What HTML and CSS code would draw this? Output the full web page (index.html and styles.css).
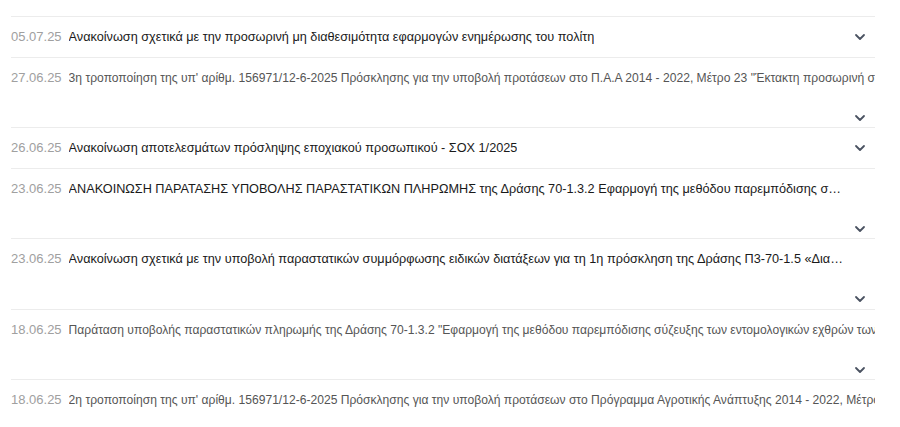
FILE: index.html
```html
<!DOCTYPE html>
<html lang="el">
<head>
    <meta charset="UTF-8">
    <meta name="viewport" content="width=device-width, initial-scale=1.0">
    <title>Ανακοινώσεις</title>
    <link rel="stylesheet" href="styles.css">
</head>
<body>
    <ul class="news">
        <li class="item">
            <div class="head">
                <span class="date">05.07.25</span>
                <span class="title">Ανακοίνωση σχετικά με την προσωρινή μη διαθεσιμότητα εφαρμογών ενημέρωσης του πολίτη</span>
            </div>
            <button class="toggle" aria-label="Άνοιγμα">
                <svg width="12" height="8" viewBox="0 0 12 8"><path d="M2 2l4 4 4-4" /></svg>
            </button>
        </li>
        <li class="item wrap plain">
            <div class="head">
                <span class="date">27.06.25</span>
                <span class="title">3η τροποποίηση της υπ' αρίθμ. 156971/12-6-2025 Πρόσκλησης για την υποβολή προτάσεων στο Π.Α.Α 2014 - 2022, Μέτρο 23 "Έκτακτη προσωρινή στήριξη</span>
            </div>
            <button class="toggle" aria-label="Άνοιγμα">
                <svg width="12" height="8" viewBox="0 0 12 8"><path d="M2 2l4 4 4-4" /></svg>
            </button>
        </li>
        <li class="item">
            <div class="head">
                <span class="date">26.06.25</span>
                <span class="title">Ανακοίνωση αποτελεσμάτων πρόσληψης εποχιακού προσωπικού - ΣΟΧ 1/2025</span>
            </div>
            <button class="toggle" aria-label="Άνοιγμα">
                <svg width="12" height="8" viewBox="0 0 12 8"><path d="M2 2l4 4 4-4" /></svg>
            </button>
        </li>
        <li class="item wrap trunc">
            <div class="head">
                <span class="date">23.06.25</span>
                <span class="title">ΑΝΑΚΟΙΝΩΣΗ ΠΑΡΑΤΑΣΗΣ ΥΠΟΒΟΛΗΣ ΠΑΡΑΣΤΑΤΙΚΩΝ ΠΛΗΡΩΜΗΣ της Δράσης 70-1.3.2 Εφαρμογή της μεθόδου παρεμπόδισης σύζευξης</span>
            </div>
            <button class="toggle" aria-label="Άνοιγμα">
                <svg width="12" height="8" viewBox="0 0 12 8"><path d="M2 2l4 4 4-4" /></svg>
            </button>
        </li>
        <li class="item wrap trunc">
            <div class="head">
                <span class="date">23.06.25</span>
                <span class="title">Ανακοίνωση σχετικά με την υποβολή παραστατικών συμμόρφωσης ειδικών διατάξεων για τη 1η πρόσκληση της Δράσης Π3-70-1.5 «Διατήρηση</span>
            </div>
            <button class="toggle" aria-label="Άνοιγμα">
                <svg width="12" height="8" viewBox="0 0 12 8"><path d="M2 2l4 4 4-4" /></svg>
            </button>
        </li>
        <li class="item wrap plain">
            <div class="head">
                <span class="date">18.06.25</span>
                <span class="title">Παράταση υποβολής παραστατικών πληρωμής της Δράσης 70-1.3.2 "Εφαρμογή της μεθόδου παρεμπόδισης σύζευξης των εντομολογικών εχθρών των καλλιεργειών"</span>
            </div>
            <button class="toggle" aria-label="Άνοιγμα">
                <svg width="12" height="8" viewBox="0 0 12 8"><path d="M2 2l4 4 4-4" /></svg>
            </button>
        </li>
        <li class="item wrap plain">
            <div class="head">
                <span class="date">18.06.25</span>
                <span class="title">2η τροποποίηση της υπ' αρίθμ. 156971/12-6-2025 Πρόσκλησης για την υποβολή προτάσεων στο Πρόγραμμα Αγροτικής Ανάπτυξης 2014 - 2022, Μέτρο 23</span>
            </div>
            <button class="toggle" aria-label="Άνοιγμα">
                <svg width="12" height="8" viewBox="0 0 12 8"><path d="M2 2l4 4 4-4" /></svg>
            </button>
        </li>
    </ul>
</body>
</html>
```

FILE: styles.css
```css
body {
    margin: 0;
    background-color: #fff;
    font-family: "Liberation Sans", Arial, sans-serif;
    font-size: 13px;
    color: #222;
}
.news {
    list-style: none;
    margin: 16px 0 0 11px;
    padding: 0;
    width: 864px;
}
.item {
    display: flex;
    align-items: center;
    border-top: 1px solid #ececec;
    padding: 12px 0 11.5px;
    line-height: 16px;
}
.head {
    flex: 1;
    min-width: 0;
    display: flex;
    align-items: baseline;
    white-space: nowrap;
    overflow: hidden;
}
.date {
    color: #a0a0a0;
    margin-right: 7px;
    flex-shrink: 0;
}
.title {
    overflow: hidden;
    color: #1a1a1a;
    font-size: 12.7px;
}
.toggle {
    width: 30px;
    height: 16px;
    padding: 0;
    border: none;
    background: none;
    display: flex;
    justify-content: center;
    align-items: center;
    cursor: pointer;
}
.toggle path {
    fill: none;
    stroke: #4a5261;
    stroke-width: 1.8;
    stroke-linecap: round;
    stroke-linejoin: round;
}

/* rows whose toggle drops below the title */
.wrap {
    flex-wrap: wrap;
    padding-bottom: 1.5px;
}
.wrap .head {
    flex-basis: 100%;
}
.wrap .toggle {
    margin-left: auto;
    margin-top: 24px;
}
.trunc .head {
    padding-right: 30px;
    box-sizing: border-box;
}
.trunc .title {
    text-overflow: ellipsis;
}
.plain .title {
    color: #555;
    font-size: 12.1px;
    text-overflow: clip;
}
```
